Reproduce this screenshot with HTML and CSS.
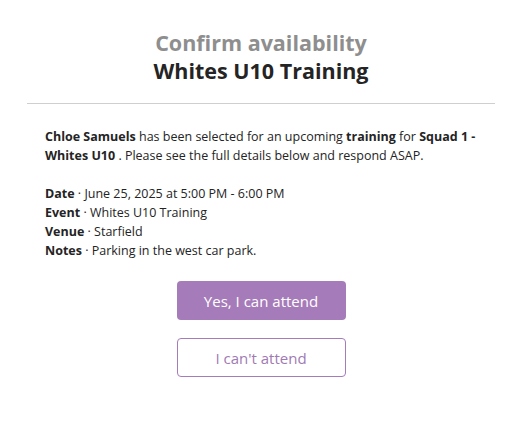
FILE: index.html
```html
<!DOCTYPE html>
<html lang="en">
  <head>
    <meta charset="UTF-8" />
    <meta name="viewport" content="width=device-width, initial-scale=1.0" />
    <title>Confirm availability</title>
    <link rel="stylesheet" href="styles.css">
  </head>
  <body>
    <div class="confirm-container">
      <div class="header">
        <h2 class="subtitle">Confirm availability</h2>
        <h1 class="title">Whites U10 Training</h1>
      </div>

      <div class="content">
        <p class="intro">
          <b>Chloe Samuels</b> has been selected for an upcoming <b>training</b> for <b>Squad 1 -</b>
          <b>Whites U10</b> . Please see the full details below and respond ASAP.
        </p>
        <div class="details">
          <div><b>Date</b> · June 25, 2025 at 5:00 PM - 6:00 PM</div>
          <div><b>Event</b> · Whites U10 Training</div>
          <div><b>Venue</b> · Starfield</div>
          <div><b>Notes</b> · Parking in the west car park.</div>
        </div>
      </div>

      <div class="actions">
        <button class="btn btn-yes">Yes, I can attend</button>
        <button class="btn btn-no">I can't attend</button>
      </div>
    </div>
  </body>
</html>
```

FILE: styles.css
```css
* {
  box-sizing: border-box;
}
body {
  margin: 0;
  font-family: "Open Sans", "Noto Sans", sans-serif;
  background: white;
  color: #242424;
}

.confirm-container {
  width: 468px;
  margin-left: 27px;
  padding-top: 29px;
}

.header {
  text-align: center;
  padding-bottom: 18px;
  border-bottom: 1px solid #cfcfcf;
}

.subtitle {
  margin: 0;
  font-size: 21.5px;
  line-height: 28px;
  font-weight: bold;
  color: #8e8e8e;
}

.title {
  margin: 0;
  font-size: 21.5px;
  line-height: 28px;
  font-weight: bold;
  color: #242424;
}

.content {
  padding: 23px 18px 0;
  font-size: 12.5px;
}

.intro {
  margin: 0 0 19px;
  line-height: 19px;
}

.details {
  line-height: 19px;
}

.actions {
  display: flex;
  flex-direction: column;
  align-items: center;
  gap: 18px;
  margin-top: 21px;
}

.btn {
  width: 169px;
  height: 39px;
  border-radius: 4px;
  font-family: inherit;
  font-size: 15px;
  cursor: pointer;
}

.btn-yes {
  background: #a67bb9;
  border: none;
  color: white;
}

.btn-no {
  background: white;
  border: 1px solid #a67bb9;
  color: #a07ab3;
}
```
